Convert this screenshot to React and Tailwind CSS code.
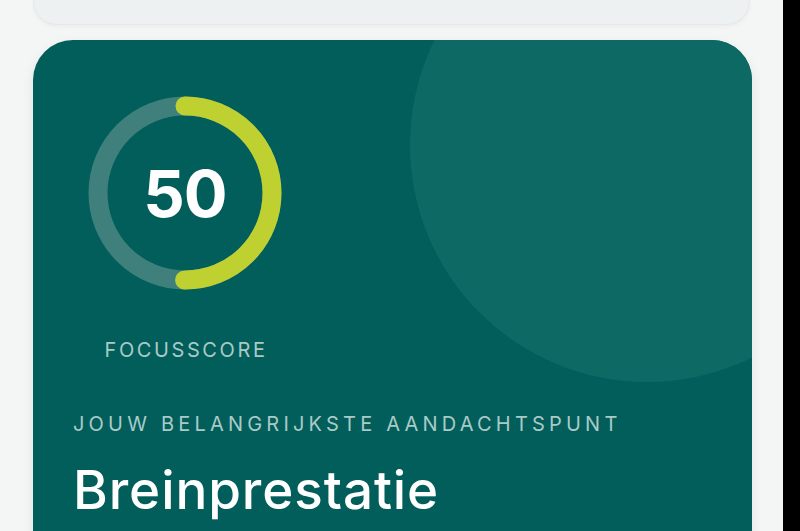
export default function App() {
  const r = 87;
  const c = 2 * Math.PI * r;
  return (
    <div className="flex h-[531px] w-[800px] overflow-hidden bg-[#f4f6f6]" style={{ fontFamily: "Inter, 'Noto Sans', sans-serif" }}>
      <div className="flex-1 flex flex-col">
        <div className="mx-[33px] h-[25px] shrink-0 rounded-b-[24px] border border-t-0 border-[#e3e8e8] bg-[#eef1f1] shadow-[0_2px_4px_rgba(0,0,0,0.04)]" />
        <div className="relative mt-[15px] ml-[33px] mr-[31px] h-[600px] shrink-0 overflow-hidden rounded-[40px] bg-[#015e5a] pl-[40px] pt-[56px] shadow-[0_4px_12px_rgba(0,0,0,0.08)]">
          <div className="absolute left-[377px] top-[-132px] h-[474px] w-[474px] rounded-full bg-[#0d6964]" />
          <div className="relative flex w-[224px] flex-col items-center">
            <div className="relative h-[194px] w-[194px]">
              <svg width="194" height="194" viewBox="0 0 194 194" className="absolute inset-0">
                <circle cx="97" cy="97" r={r} fill="none" stroke="#3f807d" strokeWidth="19" />
                <circle
                  cx="97"
                  cy="97"
                  r={r}
                  fill="none"
                  stroke="#bfd131"
                  strokeWidth="19"
                  strokeLinecap="round"
                  strokeDasharray={`${c / 2} ${c}`}
                  transform="rotate(-90 97 97)"
                />
              </svg>
              <div className="absolute inset-0 flex items-center justify-center text-[65px] font-bold leading-none text-white tracking-[-1px]">
                50
              </div>
            </div>
            <div className="mt-[48px] pl-[2px] text-[20px] leading-[24px] tracking-[2.6px] text-[#a9cac7]">FOCUSSCORE</div>
          </div>
          <div className="relative mt-[50px] text-[20px] leading-[24px] tracking-[4.2px] text-[#a9cac7]">
            JOUW BELANGRIJKSTE AANDACHTSPUNT
          </div>
          <div className="relative mt-[22px] text-[53px] font-medium leading-[64px] tracking-[0.9px] text-white">Breinprestatie</div>
        </div>
      </div>
      <div className="w-[17px] shrink-0 bg-black" />
    </div>
  );
}
